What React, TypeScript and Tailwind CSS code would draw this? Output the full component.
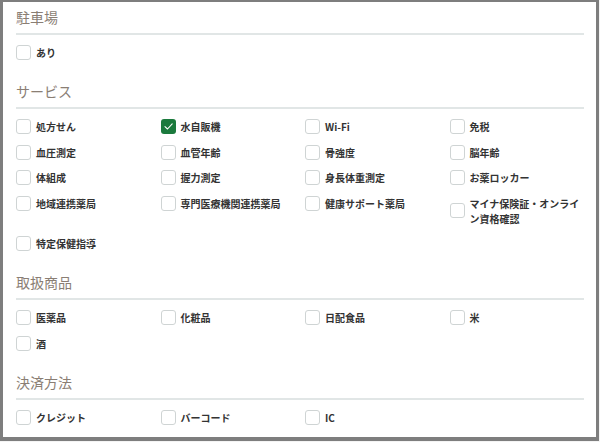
import React from "react";

type Item = { label: string; checked?: boolean };
type Section = { title: string; items: Item[] };

const sections: Section[] = [
  { title: "駐車場", items: [{ label: "あり" }] },
  {
    title: "サービス",
    items: [
      { label: "処方せん" },
      { label: "水自販機", checked: true },
      { label: "Wi-Fi" },
      { label: "免税" },
      { label: "血圧測定" },
      { label: "血管年齢" },
      { label: "骨強度" },
      { label: "脳年齢" },
      { label: "体組成" },
      { label: "握力測定" },
      { label: "身長体重測定" },
      { label: "お薬ロッカー" },
      { label: "地域連携薬局" },
      { label: "専門医療機関連携薬局" },
      { label: "健康サポート薬局" },
      { label: "マイナ保険証・オンライン資格確認" },
      { label: "特定保健指導" },
    ],
  },
  {
    title: "取扱商品",
    items: [{ label: "医薬品" }, { label: "化粧品" }, { label: "日配食品" }, { label: "米" }, { label: "酒" }],
  },
  {
    title: "決済方法",
    items: [{ label: "クレジット" }, { label: "バーコード" }, { label: "IC" }],
  },
];

function Check({ item }: { item: Item }) {
  return (
    <label className="flex items-center gap-[5px]">
      {item.checked ? (
        <span className="flex h-[15px] w-[15px] shrink-0 items-center justify-center rounded-[3px] bg-[#1b7a3d]">
          <svg width="11" height="11" viewBox="0 0 11 11" fill="none">
            <path d="M2 5.6 L4.5 8 L9.2 2.8" stroke="#ffffff" strokeWidth="1.1" strokeLinecap="round" strokeLinejoin="round" />
          </svg>
        </span>
      ) : (
        <span className="h-[15px] w-[15px] shrink-0 rounded-[3px] border border-[#cfd4d4] bg-white" />
      )}
      <span className="text-[10px] font-bold leading-[15px] text-[#333333]">{item.label}</span>
    </label>
  );
}

export default function App() {
  return (
    <div
      className="h-[442px] w-[600px] overflow-hidden bg-[#f4f4f4] pr-[1px] pb-[1px]"
      style={{ fontFamily: '"Noto Sans CJK JP", "Noto Sans", sans-serif' }}
    >
      <div className="h-full w-full border-l-[3px] border-t-[2px] border-r-[3px] border-b-[4px] border-[#7e7e7e] bg-white pl-[13px] pr-[12px] pt-[5px]">
        {sections.map((s, i) => (
          <div key={s.title} className={i > 0 ? "mt-[21px]" : ""}>
            <div className="border-b-[2px] border-[#e1e6e6] pb-[6px] text-[14px] leading-[20px] text-[#8a7e74]">
              {s.title}
            </div>
            <div className="mt-[10px] grid grid-cols-4 items-start gap-x-[10px] gap-y-[10.5px]">
              {s.items.map((it) => (
                <Check key={it.label} item={it} />
              ))}
            </div>
          </div>
        ))}
      </div>
    </div>
  );
}
